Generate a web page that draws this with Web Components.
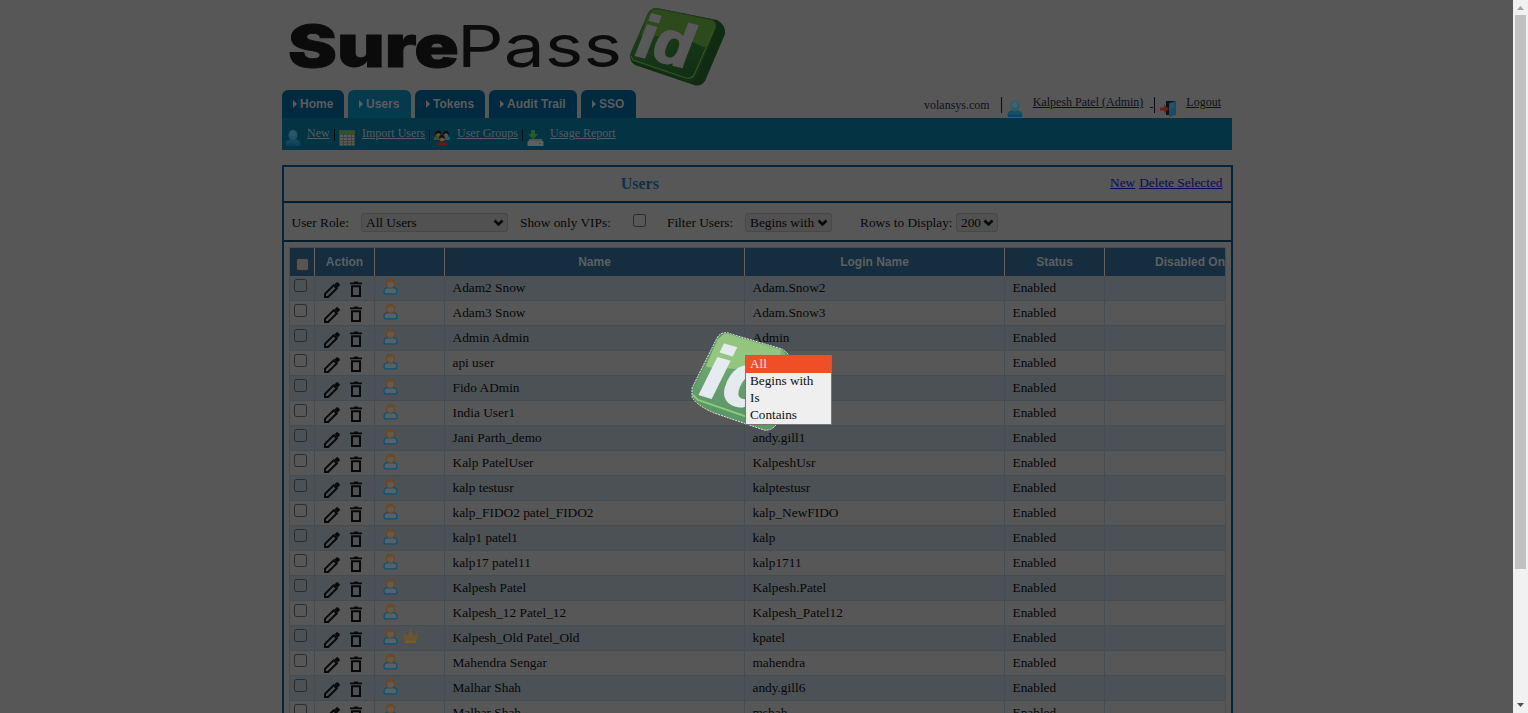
<!DOCTYPE html>
<html lang="en"><head><meta charset="utf-8"><title>SurePassID</title>
<style>
html,body{margin:0;height:713px;overflow:hidden;background:#575757}
body{font:13.333px "Liberation Serif",serif;color:#070707;display:flex}
</style></head><body>
<sp-page></sp-page><sp-scrollbar></sp-scrollbar>
<script>
const define=(name,html,setup)=>customElements.define(name,class extends HTMLElement{
  connectedCallback(){if(this.shadowRoot)return;const r=this.attachShadow({mode:'open'});r.innerHTML=typeof html==='function'?html(this):html;if(setup)setup(this,r);}
});
const ICONS={
 person:`<svg width="16" height="18" viewBox="0 0 16 18"><path d="M.8 16v-2C1 11.800 3 10.700 5 10.300h5.400c2.400.4 4.800 1.600 4.800 4.200V16q0 1-1 1H1.800q-1 0-1-1z" fill="#174e66"/><ellipse cx="8" cy="6" rx="4.600" ry="5.300" fill="#2a5a6c"/><ellipse cx="7.700" cy="4.500" rx="3" ry="3" fill="#3b6473"/><path d="M.8 14.500h14.400V16q0 1-1 1H1.800q-1 0-1-1z" fill="#0d4360"/></svg>`,
 grid:`<svg width="16" height="16" viewBox="0 0 16 16"><path fill="#3f4241" d="M0 0h16v16H0z"/><path fill="#2f5424" d="M1 1h14v3H1z"/><path fill="#5a5c5a" d="M1 5h3v2H1zM5 5h3v2H5zM9 5h3v2H9zM13 5h2v2h-2zM1 8h3v2H1zM5 8h3v2H5zM9 8h3v2H9zM13 8h2v2h-2zM1 11h3v1.500H1zM5 11h3v1.500H5zM9 11h3v1.500H9zM13 11h2v1.500h-2zM1 13.500h3V15H1zM5 13.500h3V15H5zM9 13.500h3V15H9zM13 13.500h2V15h-2z"/></svg>`,
 group:`<svg width="16" height="16" viewBox="0 0 16 16"><path fill="#28572d" d="M0 10V7l3-1 3 1v3z"/><path fill="#155e7a" d="M10 10V7l3-1 3 1v3z"/><circle cx="4" cy="4.500" r="2.300" fill="#6b4c2b"/><path d="M1 5c-.5-6 7-5.500 6-1L4 3z" fill="#150e0b"/><circle cx="12" cy="5" r="2.300" fill="#60513a"/><path d="M9 5c0-5.500 6-5.500 6 0l-3-2z" fill="#0d0d0d"/><circle cx="8" cy="9" r="2.500" fill="#74502e"/><path d="M5 9c0-5.500 6-5.500 6 0L8 7.500z" fill="#250d09"/><path d="M3 15.500v-2.500l3.500-1.500L8 13l1.500-1.500L13 13v2.500z" fill="#751312"/></svg>`,
 download:`<svg width="17" height="16" viewBox="0 0 17 16"><path fill="#4e5555" d="M2.500 9h12l1.700 3H.8z"/><path fill="#245c28" d="M4 0h4v4h3L6 9.500 1 4h3z"/><rect x=".5" y="11" width="16" height="5" rx="1" fill="#5d6060"/><path fill="#295a29" d="M12 13h2v1h-2z"/></svg>`,
 exit:`<svg width="17" height="17" viewBox="0 0 17 17"><path fill="#06151c" d="M6 1h10v14H6z"/><path fill="#1a4b63" d="m9 3 7-2v14l-7 2z"/><path fill="#285667" d="m10 4 4-1v4l-4 2z"/><path fill="#64221d" d="M0 7.500h4V4.500l5 4.500-5 4.500v-3H0z"/></svg>`,
 pencil:`<svg width="18" height="18" viewBox="0 0 18 18"><path d="m2 12.900 8.600-8.600 3.100 3.100L5.100 16H2z" fill="none" stroke="#080808" stroke-width="2"/><path d="m11.300 3.600 2.200-2.200q.7-.7 1.400 0l1.700 1.700q.7.700 0 1.400l-2.200 2.200z" fill="#080808"/></svg>`,
 trash:`<svg width="14" height="17" viewBox="0 0 14 17"><path d="M1 1.500h3.500L5.500.5h3l1 1H13v1.800H1z" fill="#080808"/><path d="M3 5.200h8v9.800H3z" fill="none" stroke="#080808" stroke-width="2"/></svg>`,
 user:`<svg width="15" height="16" viewBox="0 0 15 16"><path d="M1 12.500C1 10 3 8.600 5 8.600h5c2 0 4 1.400 4 3.900 0 1.500-.8 2.400-1.800 2.400H2.800C1.800 14.900 1 14 1 12.500z" fill="#54626a" stroke="#0a5174" stroke-width="1.200"/><ellipse cx="7.500" cy="4.900" rx="4" ry="4.300" fill="#625b50" stroke="#6b4520" stroke-width="1.200"/><path d="M3.800 3.600C4.500.200 10.500.200 11.200 3.600L9 2.900l-2 .6z" fill="#6c4b29"/></svg>`,
 crown:`<svg width="17" height="15" viewBox="0 0 17 15"><path d="m1 3 4 4 3.500-6L12 7l4-4-2 11H3z" fill="#6c5530"/><path d="M3.500 12h10v2h-10z" fill="#7c5a24"/><circle cx="1.200" cy="2.500" r="1" fill="#65553b"/><circle cx="8.500" cy="1.300" r="1.200" fill="#65553b"/><circle cx="15.800" cy="2.500" r="1" fill="#65553b"/></svg>`
};
define('sp-icon',e=>`<style>:host{display:block;line-height:0;flex:none}</style>${ICONS[e.getAttribute('name')]}`);
define('sp-check',`<style>:host{display:block;box-sizing:border-box;width:13px;height:13px;border:1px solid #2b2b2b;border-radius:2.500px;background:var(--fill,transparent);flex:none}</style>`);
define('sp-select',`<style>:host{display:flex;box-sizing:border-box;height:19px;border:1px solid #474747;border-radius:3px;background:#515151;align-items:center;justify-content:space-between;padding:0 3px 0 4px;white-space:nowrap;flex:none;line-height:17px}svg{flex:none}</style><span><slot></slot></span><svg width="11" height="8" viewBox="0 0 11 8"><path d="m1.500 1.500 4 4 4-4" fill="none" stroke="#060606" stroke-width="2.500"/></svg>`);
define('sp-badge',`<style>:host{display:block;line-height:0}svg{overflow:visible}text{font:italic bold 64px "Liberation Sans",sans-serif}</style>
<svg width="98" height="80" viewBox="0 0 98 80"><defs><linearGradient id="g" x2=".5" y2="1"><stop stop-color="#1f4319"/><stop offset="1" stop-color="#122f14"/></linearGradient></defs>
<path d="M27 0 88 12Q97 17 96 26L76 73q-4 6-11 4L6 57q-6-4-4-10L20 4q3-4 7-4z" fill="#112b13"/>
<path d="M28 0 82 11q7 2 5 9L68 69q-3 6-10 4L4 53q-5-3-2-9L19 5q3-5 9-5z" fill="url(#g)"/>
<path d="M28 1 82 12q6 2 4 8L79 37q-3 4-9 0-20-12-55-8-4-1-2-5L19 8q3-7 9-7z" fill="#2c4a1c"/>
<path d="m2 48 2 4 53 18q7 1 9-5L86 19" fill="none" stroke="#315525" stroke-width="1.200"/>
<text transform="matrix(.93 .24 -.16 .93 6 47)" textLength="58" lengthAdjust="spacingAndGlyphs" fill="#595959" stroke="#595959" stroke-width="2.200">id</text></svg>`);
define('sp-logo',`<style>:host{display:flex;height:90px;box-sizing:border-box;padding:8px 0 0 6px}.w{line-height:0;overflow:visible}text{font-family:Inter,"Liberation Sans",sans-serif;fill:#0b0b0b}</style>
<svg class="w" width="341" height="78" viewBox="0 0 341 78"><text x="0" y="59" font-size="58" font-weight="900" textLength="171" lengthAdjust="spacingAndGlyphs" stroke="#0b0b0b" stroke-width=".8">Sure</text><text x="169" y="59" font-size="58" font-weight="400" textLength="165" lengthAdjust="spacingAndGlyphs">Pass</text></svg><sp-badge></sp-badge>`);
define('sp-tab',e=>`<style>:host{display:flex;box-sizing:border-box;height:28px;width:${e.getAttribute('w')}px;margin-right:4px;padding-left:11px;align-items:center;gap:3px;border-radius:6px 6px 0 0;background:#002a3f;color:#5c5c5c;font:bold 12px "Liberation Sans",sans-serif;white-space:nowrap}:host([on]){background:#043a4d}</style><svg width="4" height="8"><path d="M0 0 4 4 0 8z" fill="#5c5c5c"/></svg><slot></slot>`);
define('sp-account',`<style>:host{display:flex;font-size:12px;color:#10101b;margin-left:auto;height:28px;line-height:14px;white-space:nowrap}span{margin-top:8px;margin-right:11px}i{width:1px;height:16px;background:#0b0b18;margin-top:7px}sp-icon{margin-top:10px}u{margin-top:5px;text-decoration-color:#0b0b40}</style>
<span>volansys.com</span><i></i><sp-icon name="person" style="margin-left:5px"></sp-icon><u style="margin-left:10px">Kalpesh Patel (Admin)</u><u style="width:3px;border-bottom:1px solid #0b0b40;height:12px;margin-left:7px"></u><i style="margin-left:1px"></i><sp-icon name="exit" style="margin-left:5px"></sp-icon><u style="margin:5px 11px 0 9px">Logout</u>`);
define('sp-nav',`<style>:host{display:block}.t{display:flex}.b{height:32px;background:#043344;display:flex;color:#535d60;font-size:12px;line-height:14px;white-space:nowrap}u{margin-top:8px}i{width:1px;height:12px;margin-top:11px;background:#001014}sp-icon{margin-top:12px}</style>
<div class="t"><sp-tab w="62">Home</sp-tab><sp-tab on w="63">Users</sp-tab><sp-tab w="70">Tokens</sp-tab><sp-tab w="88">Audit Trail</sp-tab><sp-tab w="55">SSO</sp-tab><sp-account></sp-account></div>
<div class="b"><sp-icon name="person" style="margin:11px 6px 0 3px;width:16px;opacity:.75"></sp-icon><u style="width:23px">New</u><i style="margin-left:4px"></i><sp-icon name="grid" style="margin-left:4px"></sp-icon><u style="margin-left:7px;width:64px">Import Users</u><i style="margin-left:3px"></i><sp-icon name="group" style="margin-left:4px"></sp-icon><u style="margin-left:7px;width:62px">User Groups</u><i style="margin-left:3px"></i><sp-icon name="download" style="margin-left:4px"></sp-icon><u style="margin-left:6px">Usage Report</u></div>`);
define('sp-row',e=>`<style>:host{display:grid;grid-template-columns:25px 60px 70px 300px 260px 100px 121px;height:25px;background:#575757}:host([alt]){background:#4b5155}div{border-right:1px solid #454c52;border-bottom:1px solid #454c52;box-sizing:border-box;white-space:nowrap;line-height:23px;padding-left:7.500px;display:flex}</style>
<div style="padding:3px 0 0 4px"><sp-check></sp-check></div><div style="padding:5px 0 0 8px;gap:8px"><sp-icon name="pencil"></sp-icon><sp-icon name="trash"></sp-icon></div><div style="padding:3px 0 0 8px;gap:4px"><sp-icon name="user"></sp-icon>${e.hasAttribute('vip')?'<sp-icon name="crown"></sp-icon>':''}</div><div>${e.getAttribute('name')}</div><div>${e.getAttribute('login')}</div><div>Enabled</div><div></div>`);
const people=[['Adam2 Snow','Adam.Snow2'],['Adam3 Snow','Adam.Snow3'],['Admin Admin','Admin'],['api user',''],['Fido ADmin',''],['India User1',''],['Jani Parth_demo','andy.gill1'],['Kalp PatelUser','KalpeshUsr'],['kalp testusr','kalptestusr'],['kalp_FIDO2 patel_FIDO2','kalp_NewFIDO'],['kalp1 patel1','kalp'],['kalp17 patel11','kalp1711'],['Kalpesh Patel','Kalpesh.Patel'],['Kalpesh_12 Patel_12','Kalpesh_Patel12'],['Kalpesh_Old Patel_Old','kpatel'],['Mahendra Sengar','mahendra'],['Malhar Shah','andy.gill6'],['Malhar Shah','mshah']];
define('sp-table',`<style>:host{display:block;width:936px;margin:5px 0 0 5px;border:1px solid #454c52;border-right:0}.h{display:grid;grid-template-columns:25px 60px 70px 300px 260px 100px 121px;height:28px;background:#152d3e;color:#5b6064;font:bold 12px/28px "Liberation Sans",sans-serif}.h div{text-align:center;border-right:1px solid #626262;white-space:nowrap;box-sizing:border-box}.h div:last-child{text-align:right;border-color:#454c52;padding-right:0}</style>
<div class="h"><div style="padding:10px 0 0 6px"><sp-check style="--fill:#555"></sp-check></div><div>Action</div><div></div><div>Name</div><div>Login Name</div><div>Status</div><div>Disabled On</div></div>${people.map((p,i)=>`<sp-row ${i%2?'':'alt'} ${i===14?'vip':''} name="${p[0]}" login="${p[1]}"></sp-row>`).join('')}`);
define('sp-panel',`<style>:host{display:block;box-sizing:border-box;width:951px;height:700px;margin-top:15px;border:2px solid #07243a}.a{display:flex;height:34px;border-bottom:2px solid #041c2b;font-size:13.333px;line-height:33px}.a b{font-size:16px;color:#0f3049;width:711.500px;text-align:center}.a u{color:#0b0b55;margin-right:4px}.f{display:flex;height:37px;border-bottom:2px solid #041c2b;line-height:39px;white-space:nowrap}.f sp-select{margin-top:10px}</style>
<div class="a"><b>Users</b><span style="margin-left:auto;margin-right:4.500px;line-height:31px"><u>New</u><u>Delete Selected</u></span></div>
<div class="f"><span style="width:69.500px;margin-left:7.500px">User Role:</span><sp-select style="width:147px">All Users</sp-select><span style="margin-left:12px;width:113px">Show only VIPs:</span><sp-check style="margin-top:11px"></sp-check><span style="margin-left:21px;width:78px">Filter Users:</span><sp-select style="width:87px">Begins with</sp-select><span style="margin-left:28px;width:96px">Rows to Display:</span><sp-select style="width:42px">200</sp-select></div><sp-table></sp-table>`);
define('sp-loader',`<style>:host{position:absolute;left:690px;top:331px;line-height:0;opacity:.95}svg{overflow:visible}text{font:italic bold 78px "Liberation Sans",sans-serif}</style>
<svg width="108" height="101" viewBox="0 0 108 101"><defs><linearGradient id="g" x2="0" y2="1"><stop stop-color="#8ec980"/><stop offset=".4" stop-color="#6fa973"/><stop offset="1" stop-color="#5b9868"/></linearGradient></defs><path d="M34 2q3-1 7 1l51 15q5 3 8 8L86 94q-5 6-12 5l-50-17Q6 74 2 66V57L27 7q3-5 7-5z" fill="#5b9c68" stroke="#ececec" stroke-dasharray="2 1"/><path d="M34 3q3-1 7 1l49 14q7 3 5 10L78 84q-4 8-12 5L8 68q-6-3-4-10L28 8z" fill="url(#g)"/><path d="M34 3q3-1 7 1l50 15-3 27Q65 38 28 37q-9 0-12-2L28 8z" fill="#98cc82"/><path d="m3 64 5 5 58 20 9-1 7-9" fill="none" stroke="#91cf7c" stroke-width="2"/><text transform="matrix(.93 .27 -.24 .93 9 63)" textLength="74" lengthAdjust="spacingAndGlyphs" fill="#edf3f8" stroke="#edf3f8" stroke-width="2.500">id</text></svg>`);
define('sp-menu',`<style>:host{position:absolute;left:745px;top:355px;box-sizing:border-box;width:87px;height:70px;border:1px solid #777;background:#efefef;color:#101010;line-height:17px;font-size:13.200px}div{padding-left:4px;height:17px;line-height:15px}.s{background:#f04e27;color:#f5e8e4}</style><div class="s">All</div><div>Begins with</div><div>Is</div><div>Contains</div>`);
define('sp-page',`<style>:host{display:block;width:1513px;height:713px;overflow:hidden;background:#575757}main{width:950px;margin-left:282px}</style><main><sp-logo></sp-logo><sp-nav></sp-nav><sp-panel></sp-panel></main><sp-loader></sp-loader><sp-menu></sp-menu>`);
define('sp-scrollbar',`<style>:host{display:flex;flex-direction:column;align-items:center;width:15px;height:713px;background:#f1f1f1}div{width:11px;height:554px;background:#c1c1c1}svg{flex:none}</style><svg width="15" height="15"><path d="M4 10 7.500 6 11 10z" fill="#a3a3a3"/></svg><div></div><svg style="margin-top:auto" width="15" height="15"><path d="M4 5 7.500 9 11 5z" fill="#505050"/></svg>`);
</script></body></html>
